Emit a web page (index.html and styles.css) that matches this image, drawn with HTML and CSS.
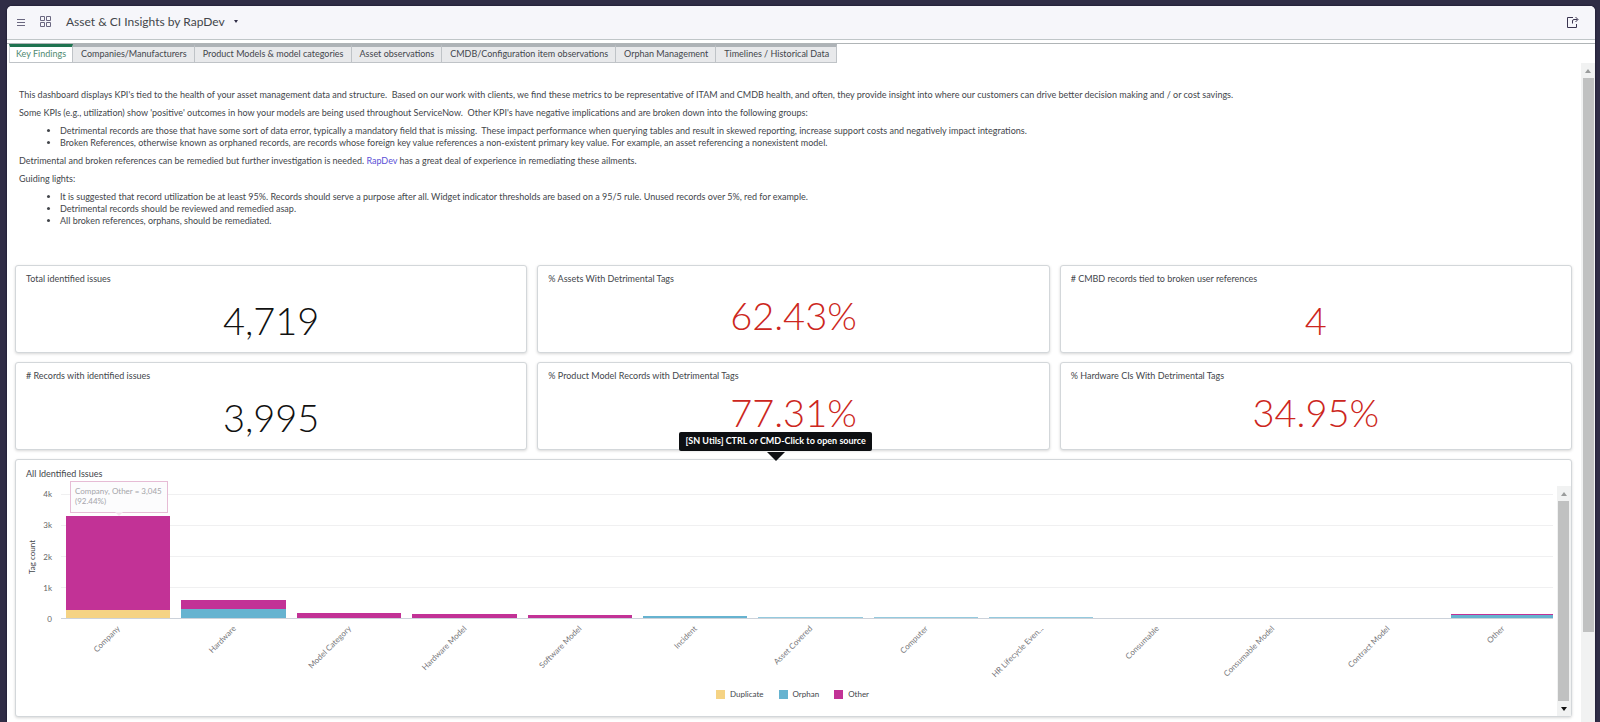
FILE: index.html
```
<!DOCTYPE html>
<html lang="en">
<head>
  <meta charset="UTF-8" />
  <meta name="viewport" content="width=device-width, initial-scale=1.0"/>
  <title>Asset &amp; CI Insights by RapDev</title>
  <link rel="stylesheet" href="styles.css">
</head>
<body>
  <div class="window">
    <header class="header">
      <button class="icon-btn" aria-label="Menu">
        <svg width="9" height="8" viewBox="0 0 9 8" stroke="#6a6780" stroke-width="1"><path d="M0 1.500h8M0 4.500h8M0 7.500h8"/></svg>
      </button>
      <button class="icon-btn grid-btn" aria-label="Dashboards">
        <svg width="11" height="11" viewBox="0 0 11 11" fill="none" stroke="#6a6780" stroke-width="1"><path d="M.5 .5h4v4h-4zM6.500 .5h4v4h-4zM.5 6.500h4v4h-4zM6.500 6.500h4v4h-4z"/></svg>
      </button>
      <button class="title-btn">Asset &amp; CI Insights by RapDev <span class="caret"></span></button>
      <button class="icon-btn share-btn" aria-label="Share">
        <svg width="12" height="12" viewBox="0 0 12 12" fill="none" stroke="#3a3550" stroke-width="1"><path d="M6 1.500H.5v10h9V8M5.500 7.500V5q0-1.500 1.500-1.500h3.500M8.500 1l2.500 2.500L8.500 6"/></svg>
      </button>
    </header>

    <nav class="tabs">
      <button class="tab active">Key Findings</button>
      <button class="tab">Companies/Manufacturers</button>
      <button class="tab">Product Models &amp; model categories</button>
      <button class="tab">Asset observations</button>
      <button class="tab">CMDB/Configuration item observations</button>
      <button class="tab">Orphan Management</button>
      <button class="tab">Timelines / Historical Data</button>
    </nav>

    <div class="page">
      <main class="content">
        <section class="intro">
          <p>This dashboard displays KPI's tied to the health of your asset management data and structure.&nbsp; Based on our work with clients, we find these metrics to be representative of ITAM and CMDB health, and often, they provide insight into where our customers can drive better decision making and / or cost savings.</p>
          <p>Some KPIs (e.g., utilization) show 'positive' outcomes in how your models are being used throughout ServiceNow.&nbsp; Other KPI's have negative implications and are broken down into the following groups:</p>
          <ul>
            <li>Detrimental records are those that have some sort of data error, typically a mandatory field that is missing.&nbsp; These impact performance when querying tables and result in skewed reporting, increase support costs and negatively impact integrations.</li>
            <li>Broken References, otherwise known as orphaned records, are records whose foreign key value references a non-existent primary key value. For example, an asset referencing a nonexistent model.</li>
          </ul>
          <p>Detrimental and broken references can be remedied but further investigation is needed. <a href="#">RapDev</a> has a great deal of experience in remediating these ailments.</p>
          <p>Guiding lights:</p>
          <ul>
            <li>It is suggested that record utilization be at least 95%. Records should serve a purpose after all. Widget indicator thresholds are based on a 95/5 rule. Unused records over 5%, red for example.</li>
            <li>Detrimental records should be reviewed and remedied asap.</li>
            <li>All broken references, orphans, should be remediated.</li>
          </ul>
        </section>

        <section class="cards">
          <div class="card">
            <h2>Total identified issues</h2>
            <div class="score total">4,719</div>
          </div>
          <div class="card">
            <h2>% Assets With Detrimental Tags</h2>
            <div class="score red">62.43%</div>
          </div>
          <div class="card">
            <h2># CMBD records tied to broken user references</h2>
            <div class="score total red">4</div>
          </div>
          <div class="card">
            <h2># Records with identified issues</h2>
            <div class="score total">3,995</div>
          </div>
          <div class="card">
            <h2>% Product Model Records with Detrimental Tags</h2>
            <div class="score red">77.31%</div>
          </div>
          <div class="card">
            <h2>% Hardware CIs With Detrimental Tags</h2>
            <div class="score red">34.95%</div>
          </div>

          <div class="card chart-card">
            <div class="utils-tip">[SN Utils] CTRL or CMD-Click to open source</div>
            <h2>All Identified Issues</h2>
            <div class="chart-row">
              <div class="chart-area">
                <div class="chart">
                  <div class="axis-title"><span>Tag count</span></div>
                  <div class="y-axis">
                    <span>4k</span><span>3k</span><span>2k</span><span>1k</span><span>0</span>
                  </div>
                  <div class="plot">
                    <div class="columns">
                      <div class="col">
                        <div class="bar"><i class="other" style="height: 94px"></i><i class="duplicate" style="height: 8px"></i></div>
                        <div class="chart-tip">Company, Other = 3,045 (92.44%)</div>
                        <span class="label">Company</span>
                      </div>
                      <div class="col">
                        <div class="bar"><i class="other" style="height: 9px"></i><i class="orphan" style="height: 9px"></i></div>
                        <span class="label">Hardware</span>
                      </div>
                      <div class="col">
                        <div class="bar"><i class="other" style="height: 5px"></i></div>
                        <span class="label">Model Category</span>
                      </div>
                      <div class="col">
                        <div class="bar"><i class="other" style="height: 4px"></i></div>
                        <span class="label">Hardware Model</span>
                      </div>
                      <div class="col">
                        <div class="bar"><i class="other" style="height: 3px"></i></div>
                        <span class="label">Software Model</span>
                      </div>
                      <div class="col">
                        <div class="bar"><i class="orphan" style="height: 2px"></i></div>
                        <span class="label">Incident</span>
                      </div>
                      <div class="col">
                        <div class="bar"><i class="orphan faint" style="height: 1px"></i></div>
                        <span class="label">Asset Covered</span>
                      </div>
                      <div class="col">
                        <div class="bar"><i class="orphan faint" style="height: 1px"></i></div>
                        <span class="label">Computer</span>
                      </div>
                      <div class="col">
                        <div class="bar"><i class="orphan faint" style="height: 1px"></i></div>
                        <span class="label">HR Lifecycle Even...</span>
                      </div>
                      <div class="col">
                        <div class="bar"></div>
                        <span class="label">Consumable</span>
                      </div>
                      <div class="col">
                        <div class="bar"></div>
                        <span class="label">Consumable Model</span>
                      </div>
                      <div class="col">
                        <div class="bar"></div>
                        <span class="label">Contract Model</span>
                      </div>
                      <div class="col">
                        <div class="bar"><i class="other" style="height: 1px"></i><i class="orphan" style="height: 3px"></i></div>
                        <span class="label">Other</span>
                      </div>
                    </div>
                  </div>
                </div>
                <div class="legend">
                  <span><i class="duplicate"></i>Duplicate</span>
                  <span><i class="orphan"></i>Orphan</span>
                  <span><i class="other"></i>Other</span>
                </div>
              </div>
              <div class="scrollbar inner">
                <span class="arrow up"></span>
                <span class="thumb"></span>
                <span class="arrow down"></span>
              </div>
            </div>
          </div>
        </section>
      </main>
      <div class="scrollbar outer">
        <span class="arrow up"></span>
        <span class="thumb"></span>
      </div>
    </div>
  </div>
</body>
</html>
```

FILE: styles.css
```
* {
  box-sizing: border-box;
}

body {
  margin: 0;
  padding: 6px 5px 0 7px;
  background-color: #302d46;
  font-family: Lato, sans-serif;
  font-size: 9px;
  line-height: 12px;
  color: #43464b;
}

button {
  font-family: inherit;
  border: none;
  background: none;
  padding: 0;
  color: inherit;
  cursor: pointer;
}

.window {
  display: flex;
  flex-direction: column;
  height: calc(100vh - 6px);
  background: white;
  border-radius: 5px 5px 0 0;
  box-shadow: 0 0 2px #0c0a20;
  overflow: hidden;
}

/* header */
.header {
  display: flex;
  align-items: center;
  height: 34px;
  padding: 0 16px 2px 10px;
  background: #f6f6fa;
  border-bottom: 1px solid #c0c6c8;
  flex-shrink: 0;
}

.icon-btn {
  display: flex;
}

.grid-btn {
  margin-left: 14px;
}

.title-btn {
  display: flex;
  align-items: center;
  gap: 9px;
  margin-left: 15px;
  font-size: 12px;
  line-height: 16px;
}

.caret {
  border: 2px solid transparent;
  border-top: 3px solid #302d46;
  border-bottom: 0;
}

.share-btn {
  margin-left: auto;
}

/* tabs */
.tabs {
  display: flex;
  height: 20px;
  margin-top: 3px;
  padding-left: 2px;
  border-top: 1px solid #b0b5b7;
  flex-shrink: 0;
}

.tab {
  padding: 0 7px 2px 8px;
  font-size: 9px;
  line-height: 12px;
  background: #e8e9eb;
  border: 1px solid #bfc3c7;
  border-left: 0;
  border-top: 3px solid #aeb3b7;
}

.tab.active {
  padding: 0 6px 2px;
  background: white;
  color: #4f8a70;
  border-left: 1px solid #d5d8da;
  border-top-color: #1f7350;
}

/* scrolling page */
.page {
  display: flex;
  flex: 1;
  min-height: 0;
}

.content {
  flex: 1;
  min-width: 0;
  padding: 26px 9px 0 8px;
  overflow: hidden;
}

.intro {
  padding: 0 4px;
  height: 176px;
}

.intro p,
.intro ul {
  margin: 0 0 6px;
}

.intro ul {
  padding-left: 41px;
}

.intro a {
  color: #5b50d6;
  text-decoration: none;
}

/* cards */
.cards {
  display: grid;
  grid-template-columns: repeat(3, 1fr);
  gap: 9px 10px;
}

.card {
  height: 88px;
  padding: 7px 10px;
  border: 1px solid #d3d7da;
  border-radius: 3px;
  box-shadow: 0 1px 3px rgba(0, 0, 0, 0.16);
  background: white;
}

.card h2 {
  margin: 0;
  font-size: 9px;
  font-weight: 400;
  line-height: 12px;
}

.score {
  padding-top: 7px;
  font-size: 38px;
  line-height: 46px;
  font-weight: 300;
  text-align: center;
  color: #111;
}

.score.total {
  padding-top: 12px;
}

.score.red {
  color: #cc2620;
}

/* chart */
.chart-card {
  position: relative;
  grid-column: 1 / -1;
  height: 258px;
  padding: 8px 0 0 10px;
}

.chart-row {
  display: flex;
  height: 236px;
  padding-top: 6px;
}

.chart-area {
  flex: 1;
  min-width: 0;
  margin-right: 4px;
}

.chart {
  display: flex;
  height: 133px;
  padding-top: 8px;
}

.axis-title {
  display: flex;
  align-items: center;
  justify-content: center;
  width: 12px;
}

.axis-title span {
  font-size: 8px;
  white-space: nowrap;
  transform: rotate(-90deg);
}

.y-axis {
  display: flex;
  flex-direction: column;
  justify-content: space-between;
  width: 14px;
  margin: -6px 0;
  text-align: right;
  font-size: 8px;
  color: #666;
}

.plot {
  flex: 1;
  min-width: 0;
  margin-left: 9px;
  background: repeating-linear-gradient(#f0f0f1 0 1px, transparent 1px 31px);
  border-bottom: 1px solid #ccd2da;
}

.columns {
  display: grid;
  grid-template-columns: repeat(13, 1fr);
  height: 100%;
  margin-right: -8px;
}

.col {
  position: relative;
}

.bar {
  display: flex;
  flex-direction: column;
  justify-content: flex-end;
  height: 100%;
  margin: 0 6px 0 5px;
}

.col:last-child .bar {
  margin-right: 8px;
}

.other {
  background: #c23296;
}

.orphan {
  background: #66b3d0;
}

.duplicate {
  background: #f5d384;
}

.faint {
  opacity: 0.7;
}

.label {
  position: absolute;
  top: 100%;
  right: 50%;
  margin-top: 3px;
  font-size: 8px;
  color: #77777a;
  white-space: nowrap;
  transform: rotate(-45deg);
  transform-origin: right center;
}

.chart-tip {
  position: absolute;
  top: -13px;
  left: 9px;
  width: 98px;
  height: 32px;
  padding: 4px;
  border: 1px solid #e6bcd5;
  background: rgba(252, 252, 253, 0.9);
  font-size: 8px;
  line-height: 10px;
  color: #a5a5aa;
}

.chart-tip::after {
  content: "";
  position: absolute;
  top: 100%;
  left: 44px;
  border: 4px solid transparent;
  border-top-color: #f5e6ef;
  border-bottom: 0;
}

.legend {
  display: flex;
  justify-content: center;
  gap: 15px;
  margin-top: 69px;
  padding-left: 6px;
  font-size: 8px;
}

.legend span {
  display: flex;
  align-items: center;
  gap: 5px;
}

.legend i {
  width: 9px;
  height: 9px;
}

.utils-tip {
  position: absolute;
  top: -28px;
  left: 50%;
  margin-left: -114px;
  padding: 3px 6px 4px;
  border-radius: 2px;
  background: #0d0f12;
  color: white;
  font-weight: 700;
  white-space: nowrap;
}

.utils-tip::after {
  content: "";
  position: absolute;
  top: 20px;
  left: 50%;
  margin-left: -9px;
  border: 9px solid transparent;
  border-top-color: #0d0f12;
  border-bottom: 0;
}

/* scrollbars */
.scrollbar {
  display: flex;
  flex-direction: column;
  align-items: center;
  width: 14px;
  background: #f1f2f2;
}

.scrollbar .thumb {
  width: 11px;
  background: #c0c1c1;
}

.outer .thumb {
  height: 84%;
}

.inner .thumb {
  flex: 1;
}

.arrow {
  display: flex;
  align-items: center;
  justify-content: center;
  height: 15px;
}

.arrow::before {
  content: "";
  border: 3px solid transparent;
}

.arrow.up::before {
  border-bottom: 4px solid #9a9c9c;
  border-top: 0;
}

.arrow.down::before {
  border-top: 4px solid #111;
  border-bottom: 0;
}
```
